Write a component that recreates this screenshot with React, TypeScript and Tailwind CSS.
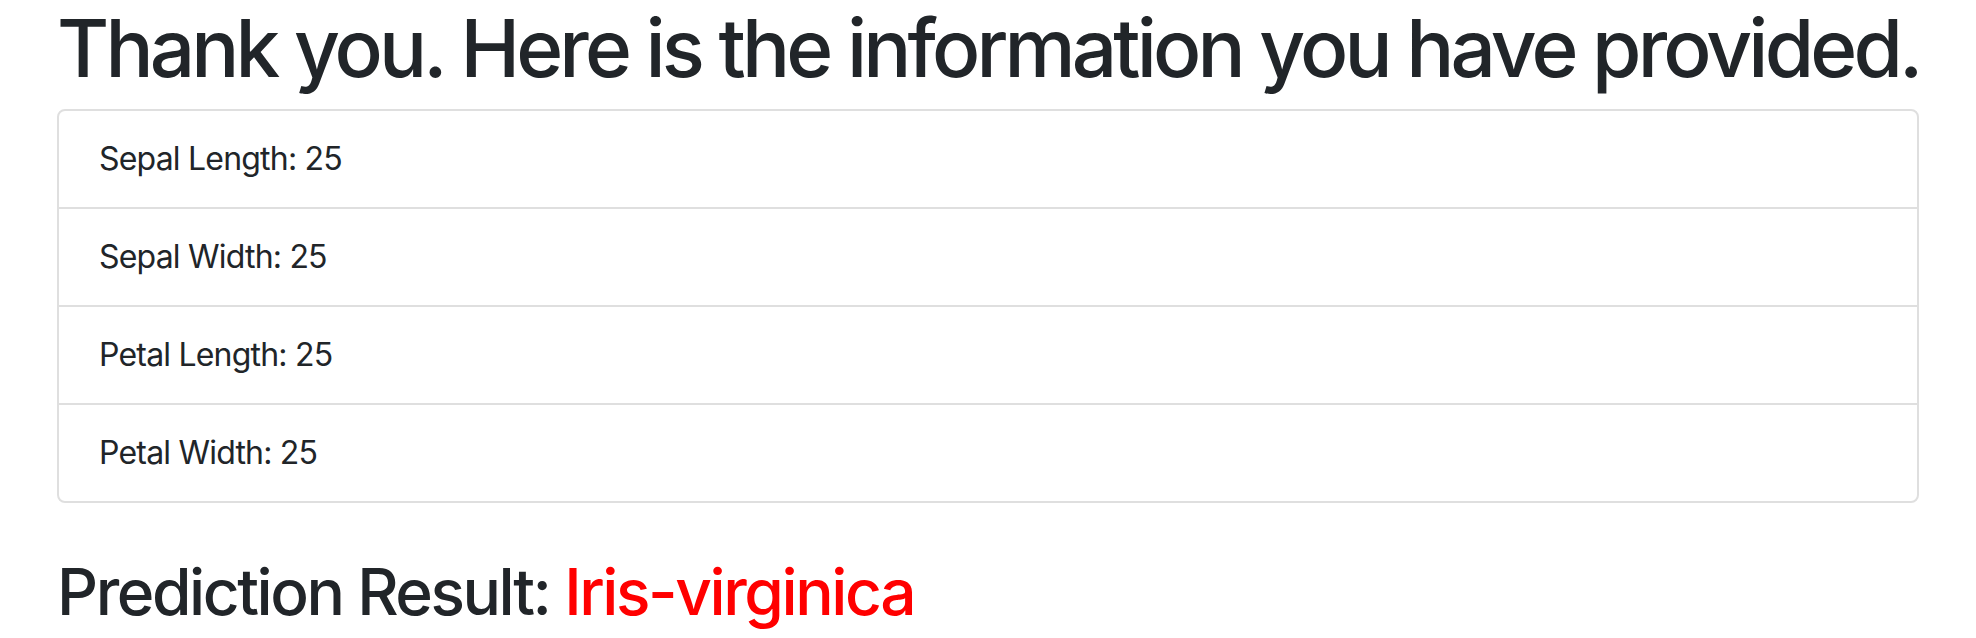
const measurements = [
  { label: "Sepal Length", value: 25 },
  { label: "Sepal Width", value: 25 },
  { label: "Petal Length", value: 25 },
  { label: "Petal Width", value: 25 },
];

export default function App() {
  return (
    <div
      className="min-h-screen bg-white px-[57px] text-[#212529]"
      style={{ fontFamily: "Inter, 'Noto Sans', sans-serif" }}
    >
      <h1 className="mb-[13px] whitespace-nowrap text-[80px] font-medium leading-[1.2] tracking-[-0.048em]">
        Thank you. Here is the information you have provided.
      </h1>

      <ul className="flex flex-col rounded-[8px] border-2 border-[#dfdfdf]">
        {measurements.map((m, i) => (
          <li
            key={i}
            className={`px-[40px] py-[24px] text-[32px] leading-[48px] tracking-[-0.025em] ${i > 0 ? "border-t-2 border-[#dfdfdf]" : ""}`}
          >
            {m.label}: {m.value}
          </li>
        ))}
      </ul>

      <h2 className="mt-[51px] whitespace-nowrap text-[64px] font-medium leading-[1.2] tracking-[-0.038em]">
        Prediction Result: <span className="text-[#ff0000]">Iris-virginica</span>
      </h2>
    </div>
  );
}
